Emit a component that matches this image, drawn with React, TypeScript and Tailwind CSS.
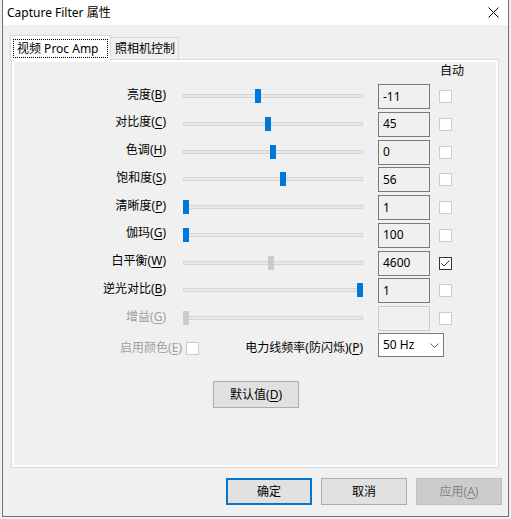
import type { ReactNode } from 'react';

type Row = {
  label: string;
  hotkey: string;
  value: string;
  pos: number;
  checked?: boolean;
  grayThumb?: boolean;
  disabled?: boolean;
};

const rows: Row[] = [
  { label: '亮度', hotkey: 'B', value: '-11', pos: 72 },
  { label: '对比度', hotkey: 'C', value: '45', pos: 82 },
  { label: '色调', hotkey: 'H', value: '0', pos: 87 },
  { label: '饱和度', hotkey: 'S', value: '56', pos: 97 },
  { label: '清晰度', hotkey: 'P', value: '1', pos: 0 },
  { label: '伽玛', hotkey: 'G', value: '100', pos: 0 },
  { label: '白平衡', hotkey: 'W', value: '4600', pos: 85, checked: true, grayThumb: true },
  { label: '逆光对比', hotkey: 'B', value: '1', pos: 174 },
  { label: '增益', hotkey: 'G', value: '', pos: 0, grayThumb: true, disabled: true },
];

const Mnemonic = ({ text, hotkey }: { text: string; hotkey: string }) => (
  <>
    {text}(<u className="underline-offset-2">{hotkey}</u>)
  </>
);

const CheckBox = ({ checked, light }: { checked?: boolean; light?: boolean }) => (
  <div
    className={`flex h-[13px] w-[13px] shrink-0 items-center justify-center border bg-white ${
      checked ? 'border-[#333333]' : light ? 'border-[#cccccc]' : 'border-[#cccccc]'
    }`}
  >
    {checked && (
      <svg width="9" height="7" viewBox="0 0 9 7" fill="none">
        <polyline points="0.5,3.5 3,6 8.5,0.5" stroke="#333333" strokeWidth="1" />
      </svg>
    )}
  </div>
);

const Slider = ({ pos, gray }: { pos: number; gray?: boolean }) => (
  <div className="relative h-[25px] w-[180px] shrink-0">
    {/* track */}
    <div className="absolute left-0 right-0 top-[10px] h-[4px] border border-[#d6d6d6] bg-[#e7e7e7]" />
    {/* thumb */}
    <div
      className={`absolute top-[5px] h-[14px] w-[6px] ${gray ? 'bg-[#cccccc]' : 'bg-[#0078d7]'}`}
      style={{ left: pos }}
    />
  </div>
);

const Button = ({ children, variant }: { children: ReactNode; variant?: 'default' | 'disabled' }) => (
  <div
    className={`flex h-[27px] w-[86px] items-center justify-center ${
      variant === 'default'
        ? 'border-2 border-[#0078d7] bg-[#e1e1e1] text-black'
        : variant === 'disabled'
          ? 'border border-[#bfbfbf] bg-[#cccccc] text-[#838383]'
          : 'border border-[#adadad] bg-[#e1e1e1] text-black'
    }`}
  >
    {children}
  </div>
);

export default function App() {
  return (
    <div className="h-[519px] w-[511px] bg-[#f0f0f0] font-[family-name:'Noto_Sans','Noto_Sans_CJK_SC',sans-serif] text-[12px] leading-[16px] text-black">
      <div className="ml-[2px] flex h-[517px] w-[507px] flex-col border-x border-b border-[#707070] bg-[#f0f0f0]">
        {/* Title bar */}
        <div className="flex h-[25px] shrink-0 items-center justify-between bg-white pl-[4px] pr-[9px]">
          <span>Capture Filter 属性</span>
          <svg width="11" height="11" viewBox="0 0 11 11" fill="none">
            <path d="M0.5 0.5 L10.5 10.5 M10.5 0.5 L0.5 10.5" stroke="#000" strokeWidth="1" />
          </svg>
        </div>

        {/* Tabs */}
        <div className="mt-[10px] flex items-end pl-[7px]">
          <div className="relative z-10 -mb-px flex h-[25px] w-[101px] items-start border-x border-t border-[#d9d9d9] bg-white px-[2px] pt-[3px]">
            <div className="flex h-[19px] w-full items-center border border-dotted border-black pl-[3px]">
              视频 Proc Amp
            </div>
          </div>
          <div className="flex h-[22px] w-[68px] items-center border-r border-t border-[#d9d9d9] bg-[#f0f0f0] pl-[4px]">
            照相机控制
          </div>
        </div>

        {/* Tab page */}
        <div className="ml-[8px] h-[409px] w-[488px] border border-[#d9d9d9] bg-white p-[2px]">
          <div className="flex h-full flex-col bg-[#f0f0f0]">
            <div className="flex h-[22px] pl-[426px] pt-[1px]">自动</div>

            <div className="flex flex-col gap-[2.75px]">
              {rows.map((r, i) => (
                <div key={i} className="flex h-[25px] items-center">
                  <div
                    className={`w-[152px] pb-[4px] text-right ${r.disabled ? 'text-[#a0a0a0]' : ''}`}
                  >
                    <Mnemonic text={r.label} hotkey={r.hotkey} />
                  </div>
                  <div className="ml-[17px]">
                    <Slider pos={r.pos} gray={r.grayThumb} />
                  </div>
                  <div
                    className={`ml-[15px] flex h-[25px] w-[52px] items-center border pl-[4px] ${
                      r.disabled ? 'border-[#cccccc]' : 'border-[#7a7a7a]'
                    }`}
                  >
                    {r.value}
                  </div>
                  <div className="ml-[9px]">
                    <CheckBox checked={r.checked} light={r.disabled} />
                  </div>
                </div>
              ))}
            </div>

            <div className="mt-[2px] flex h-[24px] items-center">
              <div className="mt-[6px] flex w-[349px] items-center">
                <span className="w-[168px] text-right text-[#a0a0a0]">
                  <Mnemonic text="启用颜色" hotkey="E" />
                </span>
                <div className="ml-[4px]">
                  <CheckBox light />
                </div>
                <span className="ml-auto">
                  <Mnemonic text="电力线频率(防闪烁)" hotkey="P" />
                </span>
              </div>
              <div className="ml-[15px] flex h-[24px] w-[66px] items-center justify-between border border-[#7a7a7a] bg-white pl-[4px] pr-[4px]">
                <span>50 Hz</span>
                <svg width="9" height="5" viewBox="0 0 9 5" fill="none">
                  <polyline points="0.5,0.5 4.5,4.5 8.5,0.5" stroke="#606060" strokeWidth="1" />
                </svg>
              </div>
            </div>

            <div className="ml-[199px] mt-[24px]">
              <Button>
                <Mnemonic text="默认值" hotkey="D" />
              </Button>
            </div>
          </div>
        </div>

        {/* Dialog buttons */}
        <div className="mt-[10px] flex justify-end gap-[9px] pr-[6px]">
          <Button variant="default">确定</Button>
          <Button>取消</Button>
          <Button variant="disabled">
            <Mnemonic text="应用" hotkey="A" />
          </Button>
        </div>
      </div>
    </div>
  );
}
